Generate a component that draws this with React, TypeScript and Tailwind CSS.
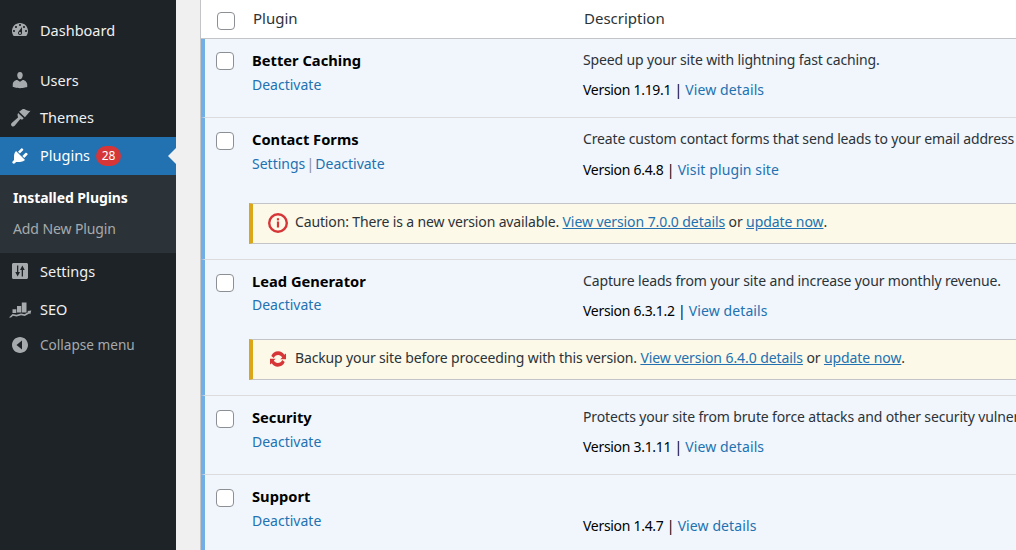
import React from "react";

const F = "font-['Noto_Sans','Open_Sans',sans-serif]";

const paths: Record<string, string> = {
  dash: "M3.76 16h12.48c1.1-1.37 1.76-3.11 1.76-5 0-4.42-3.58-8-8-8s-8 3.58-8 8c0 1.89.66 3.63 1.76 5zM10 4c.55 0 1 .45 1 1s-.45 1-1 1-1-.45-1-1 .45-1 1-1zM6 6c.55 0 1 .45 1 1s-.45 1-1 1-1-.45-1-1 .45-1 1-1zm8 0c.55 0 1 .45 1 1s-.45 1-1 1-1-.45-1-1 .45-1 1-1zm-5.37 5.55L12 7v6c0 1.1-.9 2-2 2s-2-.9-2-2c0-.57.24-1.08.63-1.45zM4 10c.55 0 1 .45 1 1s-.45 1-1 1-1-.45-1-1 .45-1 1-1zm12 0c.55 0 1 .45 1 1s-.45 1-1 1-1-.45-1-1 .45-1 1-1zm-5 3c0-.55-.45-1-1-1s-1 .45-1 1 .45 1 1 1 1-.45 1-1z",
  users: "M10 9.25c-2.27 0-2.73-3.44-2.73-3.44C7 4.02 7.82 2 9.97 2c2.16 0 2.98 2.02 2.71 3.81 0 0-.41 3.44-2.68 3.44zm0 2.57L12.72 10c2.39 0 4.52 2.33 4.52 4.53v2.49s-3.65 1.13-7.24 1.13c-3.65 0-7.24-1.13-7.24-1.13v-2.49c0-2.25 1.94-4.48 4.47-4.48z",
  themes: "M20.500 3.800l-5.600 6.400-5.800-5.400 3-2.300c1-.6 2-.4 3 0 1.800.9 3.400 1.700 5.400 1.300zM8.100 5.900l5.600 5.300-1.600 1.500-1.800-.6-5.600 6.600c-.8.9-2.100 1-3 .2-.9-.8-.9-2.200 0-3l6.300-5.500-.5-2.600z",
  plugin: "M13.11 4.36L9.87 7.6 8 5.73l3.24-3.24c.35-.34 1.05-.2 1.56.32.52.51.66 1.21.31 1.55zm-8 1.77l.91-1.12 9.01 9.01-1.19.84c-.71.71-2.63 1.16-3.82 1.16H6.14L4.9 17.26c-.59.59-1.54.59-2.12 0-.59-.58-.59-1.53 0-2.12l1.24-1.24v-3.88c0-1.13.4-3.19 1.09-3.89zm7.26 3.97l3.24-3.24c.34-.35 1.04-.21 1.55.31.52.51.66 1.21.31 1.55l-3.24 3.25z",
  settings: "M18 16.500V3.500C18 2.700 17.300 2 16.500 2h-13C2.700 2 2 2.700 2 3.500v13c0 .8.7 1.500 1.500 1.500h13c.8 0 1.500-.7 1.500-1.500zM7 4.500h1.300V11H10l-2.350 4.500L5.300 11H7zM12.350 4.500L14.700 9H13v6.500h-1.300V9H10z",
  seo: "M7 13.500V7h4.200v6.500zm4.800 0V3.500h4.700v10zM2.500 14V10.200h3.800V14zM-1 18.500l3.500-3.500 4 .8 4.500-1.300 3.500.8 3.800-2.300-1-1 4-.5-1 3.800-1-.9-4.500 2.600-3.800-.8-4.500 1.300-3.500-.8-2 1.800z",
  collapse: "M18 10c0-4.420-3.580-8-8-8s-8 3.580-8 8 3.580 8 8 8 8-3.580 8-8zm-6-4.500v9L6.500 10z",
};

function MenuIcon({ name, color = "#a7aaad" }: { name: string; color?: string }) {
  return (
    <svg width="20" height="20" viewBox="0 0 20 20" fill={color} fillRule="evenodd" className="shrink-0 overflow-visible">
      <path d={paths[name]} />
    </svg>
  );
}

function MenuItem({ icon, label, cls, children, active, dim }: { icon: string; label: string; cls: string; children?: React.ReactNode; active?: boolean; dim?: boolean }) {
  return (
    <div className={`flex items-center pl-[10px] gap-[10px] ${dim ? "text-[13.6px]" : "text-[14.5px]"} ${cls} ${active ? "bg-[#2271b1] text-white relative" : dim ? "text-[#a7aaad]" : "text-[#f0f0f1]"}`}>
      <MenuIcon name={icon} color={active ? "#ffffff" : "#a7aaad"} />
      <span className={`leading-[20px] ${active ? "pb-[2px]" : ""}`}>{label}</span>
      {children}
      {active && <span className="absolute right-0 top-[11px] w-0 h-0 border-y-[8px] border-y-transparent border-r-[8px] border-r-[#f0f0f1]" />}
    </div>
  );
}

function Link({ children, u, cls = "tracking-normal" }: { children: React.ReactNode; u?: boolean; cls?: string }) {
  return <span className={`text-[#2271b1] ${cls} ${u ? "underline" : ""}`}>{children}</span>;
}

function Box() {
  return <span className="block w-[18px] h-[18px] rounded-[4px] border border-[#8c8f94] bg-white" />;
}

function Alert() {
  return (
    <svg width="20" height="20" viewBox="0 0 20 20" fill="none" className="shrink-0">
      <circle cx="10" cy="10" r="8.800" stroke="#d63638" strokeWidth="2.400" />
      <rect x="8.900" y="8.500" width="2.200" height="6" fill="#d63638" />
      <rect x="8.900" y="5.200" width="2.200" height="2.200" fill="#d63638" />
    </svg>
  );
}

function Sync() {
  return (
    <svg width="20" height="20" viewBox="0 0 20 20" fill="#d63638" className="shrink-0">
      <path d="M10.200 2.300c2.600 0 4.800 1.300 6 3.400L18 4.500v5.700h-5.700l1.900-1.700c-.8-1.400-2.300-2.500-4-2.500-2 0-3.700 1.200-4.400 3L3.300 7c1.100-2.800 3.800-4.700 6.900-4.700z" />
      <path d="M9.800 17.700c-2.600 0-4.800-1.300-6-3.400L2 15.500V9.800h5.700l-1.900 1.700c.8 1.400 2.300 2.500 4 2.500 2 0 3.700-1.200 4.400-3l2.500 2c-1.100 2.800-3.800 4.700-6.900 4.700z" />
    </svg>
  );
}

function Notice({ icon, children, cls }: { icon: React.ReactNode; children: React.ReactNode; cls: string }) {
  return (
    <div className={`ml-[44px] flex items-center gap-[7px] pl-[15px] pb-[2px] bg-[#fcf9e8] border-y border-y-[#c3c4c7] border-l-[4px] border-l-[#dba617] text-[14px] leading-[20px] text-[#2c3338] whitespace-nowrap ${cls}`}>
      {icon}
      <span className="tracking-[-0.14px] pb-[2px]">{children}</span>
    </div>
  );
}

function Row({ name, links, desc, version, link, gap, linkGap, boxTop, h, notice, last }: { name: string; links: React.ReactNode; desc?: string; version: string; link: string; gap: string; linkGap: string; boxTop: string; h: string; notice?: React.ReactNode; last?: boolean }) {
  return (
    <div className={`bg-[#f0f6fc] border-l-[4px] border-l-[#72aee6] pt-[11px] ${last ? "" : "border-b border-b-[#dcdcde]"} ${h}`}>
      <div className="flex text-[14px] leading-[20px] whitespace-nowrap">
        <div className={`w-[47px] shrink-0 pl-[11px] ${boxTop}`}>
          <Box />
        </div>
        <div className="w-[331px] shrink-0">
          <div className="font-bold text-[14.7px] text-black">{name}</div>
          <div className={linkGap}>{links}</div>
        </div>
        <div className="flex-1">
          <div className="h-[20px] text-[#2c3338] tracking-[-0.14px]">{desc}</div>
          <div className={`text-black tracking-[-0.3px] ${gap}`}>{version} | <Link cls="tracking-[0.1px]">{link}</Link></div>
        </div>
      </div>
      {notice}
    </div>
  );
}

export default function App() {
  const nl = "tracking-[-0.08px]";
  return (
    <div className={`flex w-[1016px] h-[550px] overflow-hidden bg-[#f0f0f1] ${F}`}>
      <aside className="w-[176px] shrink-0 bg-[#1d2327]">
        <MenuItem icon="dash" label="Dashboard" cls="h-[38px] mt-[11px]" />
        <MenuItem icon="users" label="Users" cls="h-[38px] mt-[12px]" />
        <MenuItem icon="themes" label="Themes" cls="h-[36px]" />
        <MenuItem icon="plugin" label="Plugins" cls="h-[38px] mt-[2px]" active>
          <span className="-ml-[4px] h-[20px] w-[25px] rounded-full bg-[#d63638] text-white text-[12px] leading-[20px] text-center">28</span>
        </MenuItem>
        <div className="bg-[#2c3338] h-[78px] pt-[13px] pl-[13px] text-[14px] leading-[20px] tracking-[-0.1px]">
          <div className="font-bold text-white">Installed Plugins</div>
          <div className="mt-[11px] text-[#a7aaad]">Add New Plugin</div>
        </div>
        <MenuItem icon="settings" label="Settings" cls="h-[36px]" />
        <MenuItem icon="seo" label="SEO" cls="h-[38px] mt-[1px]" />
        <MenuItem icon="collapse" label="Collapse menu" cls="h-[34px]" dim />
      </aside>
      <main className="flex-1 pl-[24px] overflow-hidden">
        <div className="border-l border-l-[#c3c4c7] h-full bg-[#f0f6fc] overflow-hidden">
          <div className="h-[39px] bg-white border-b border-b-[#c3c4c7] flex items-center text-[15px] text-[#2c3338] whitespace-nowrap">
            <div className="w-[52px] pl-[16px] mt-[4px] shrink-0"><Box /></div>
            <div className="w-[331px] shrink-0 pb-[2px]">Plugin</div>
            <div className="pb-[2px]">Description</div>
          </div>
          <Row name="Better Caching" links={<Link>Deactivate</Link>} desc="Speed up your site with lightning fast caching." gap="mt-[10px]" linkGap="mt-[5px]" boxTop="pt-[2px]" h="h-[79px]"
            version="Version 1.19.1" link="View details" />
          <Row name="Contact Forms" links={<><Link>Settings</Link> <span className="text-[#8c8f94] mx-[-2.5px]">|</span> <Link>Deactivate</Link></>} desc="Create custom contact forms that send leads to your email address" gap="mt-[11px]" linkGap="mt-[5px]" boxTop="pt-[3px]" h="h-[142px]"
            version="Version 6.4.8" link="Visit plugin site"
            notice={<Notice cls="mt-[23px] h-[41px]" icon={<Alert />}>Caution: There is a new version available. <Link u cls={nl}>View version 7.0.0 details</Link> or <Link u cls={nl}>update now</Link>.</Notice>} />
          <Row name="Lead Generator" links={<Link>Deactivate</Link>} desc="Capture leads from your site and increase your monthly revenue." gap="mt-[10px]" linkGap="mt-[4px]" boxTop="pt-[3px]" h="h-[136px]"
            version="Version 6.3.1.2" link="View details"
            notice={<Notice cls="mt-[18px] h-[41px]" icon={<Sync />}>Backup your site before proceeding with this version. <Link u cls={nl}>View version 6.4.0 details</Link> or <Link u cls={nl}>update now</Link>.</Notice>} />
          <Row name="Security" links={<Link>Deactivate</Link>} desc="Protects your site from brute force attacks and other security vulnerabilities" gap="mt-[10px]" linkGap="mt-[5px]" boxTop="pt-[3px]" h="h-[79px]"
            version="Version 3.1.11" link="View details" />
          <Row name="Support" links={<Link>Deactivate</Link>} gap="mt-[10px]" linkGap="mt-[5px]" boxTop="pt-[3px]" h="h-[90px]" last
            version="Version 1.4.7" link="View details" />
        </div>
      </main>
    </div>
  );
}
